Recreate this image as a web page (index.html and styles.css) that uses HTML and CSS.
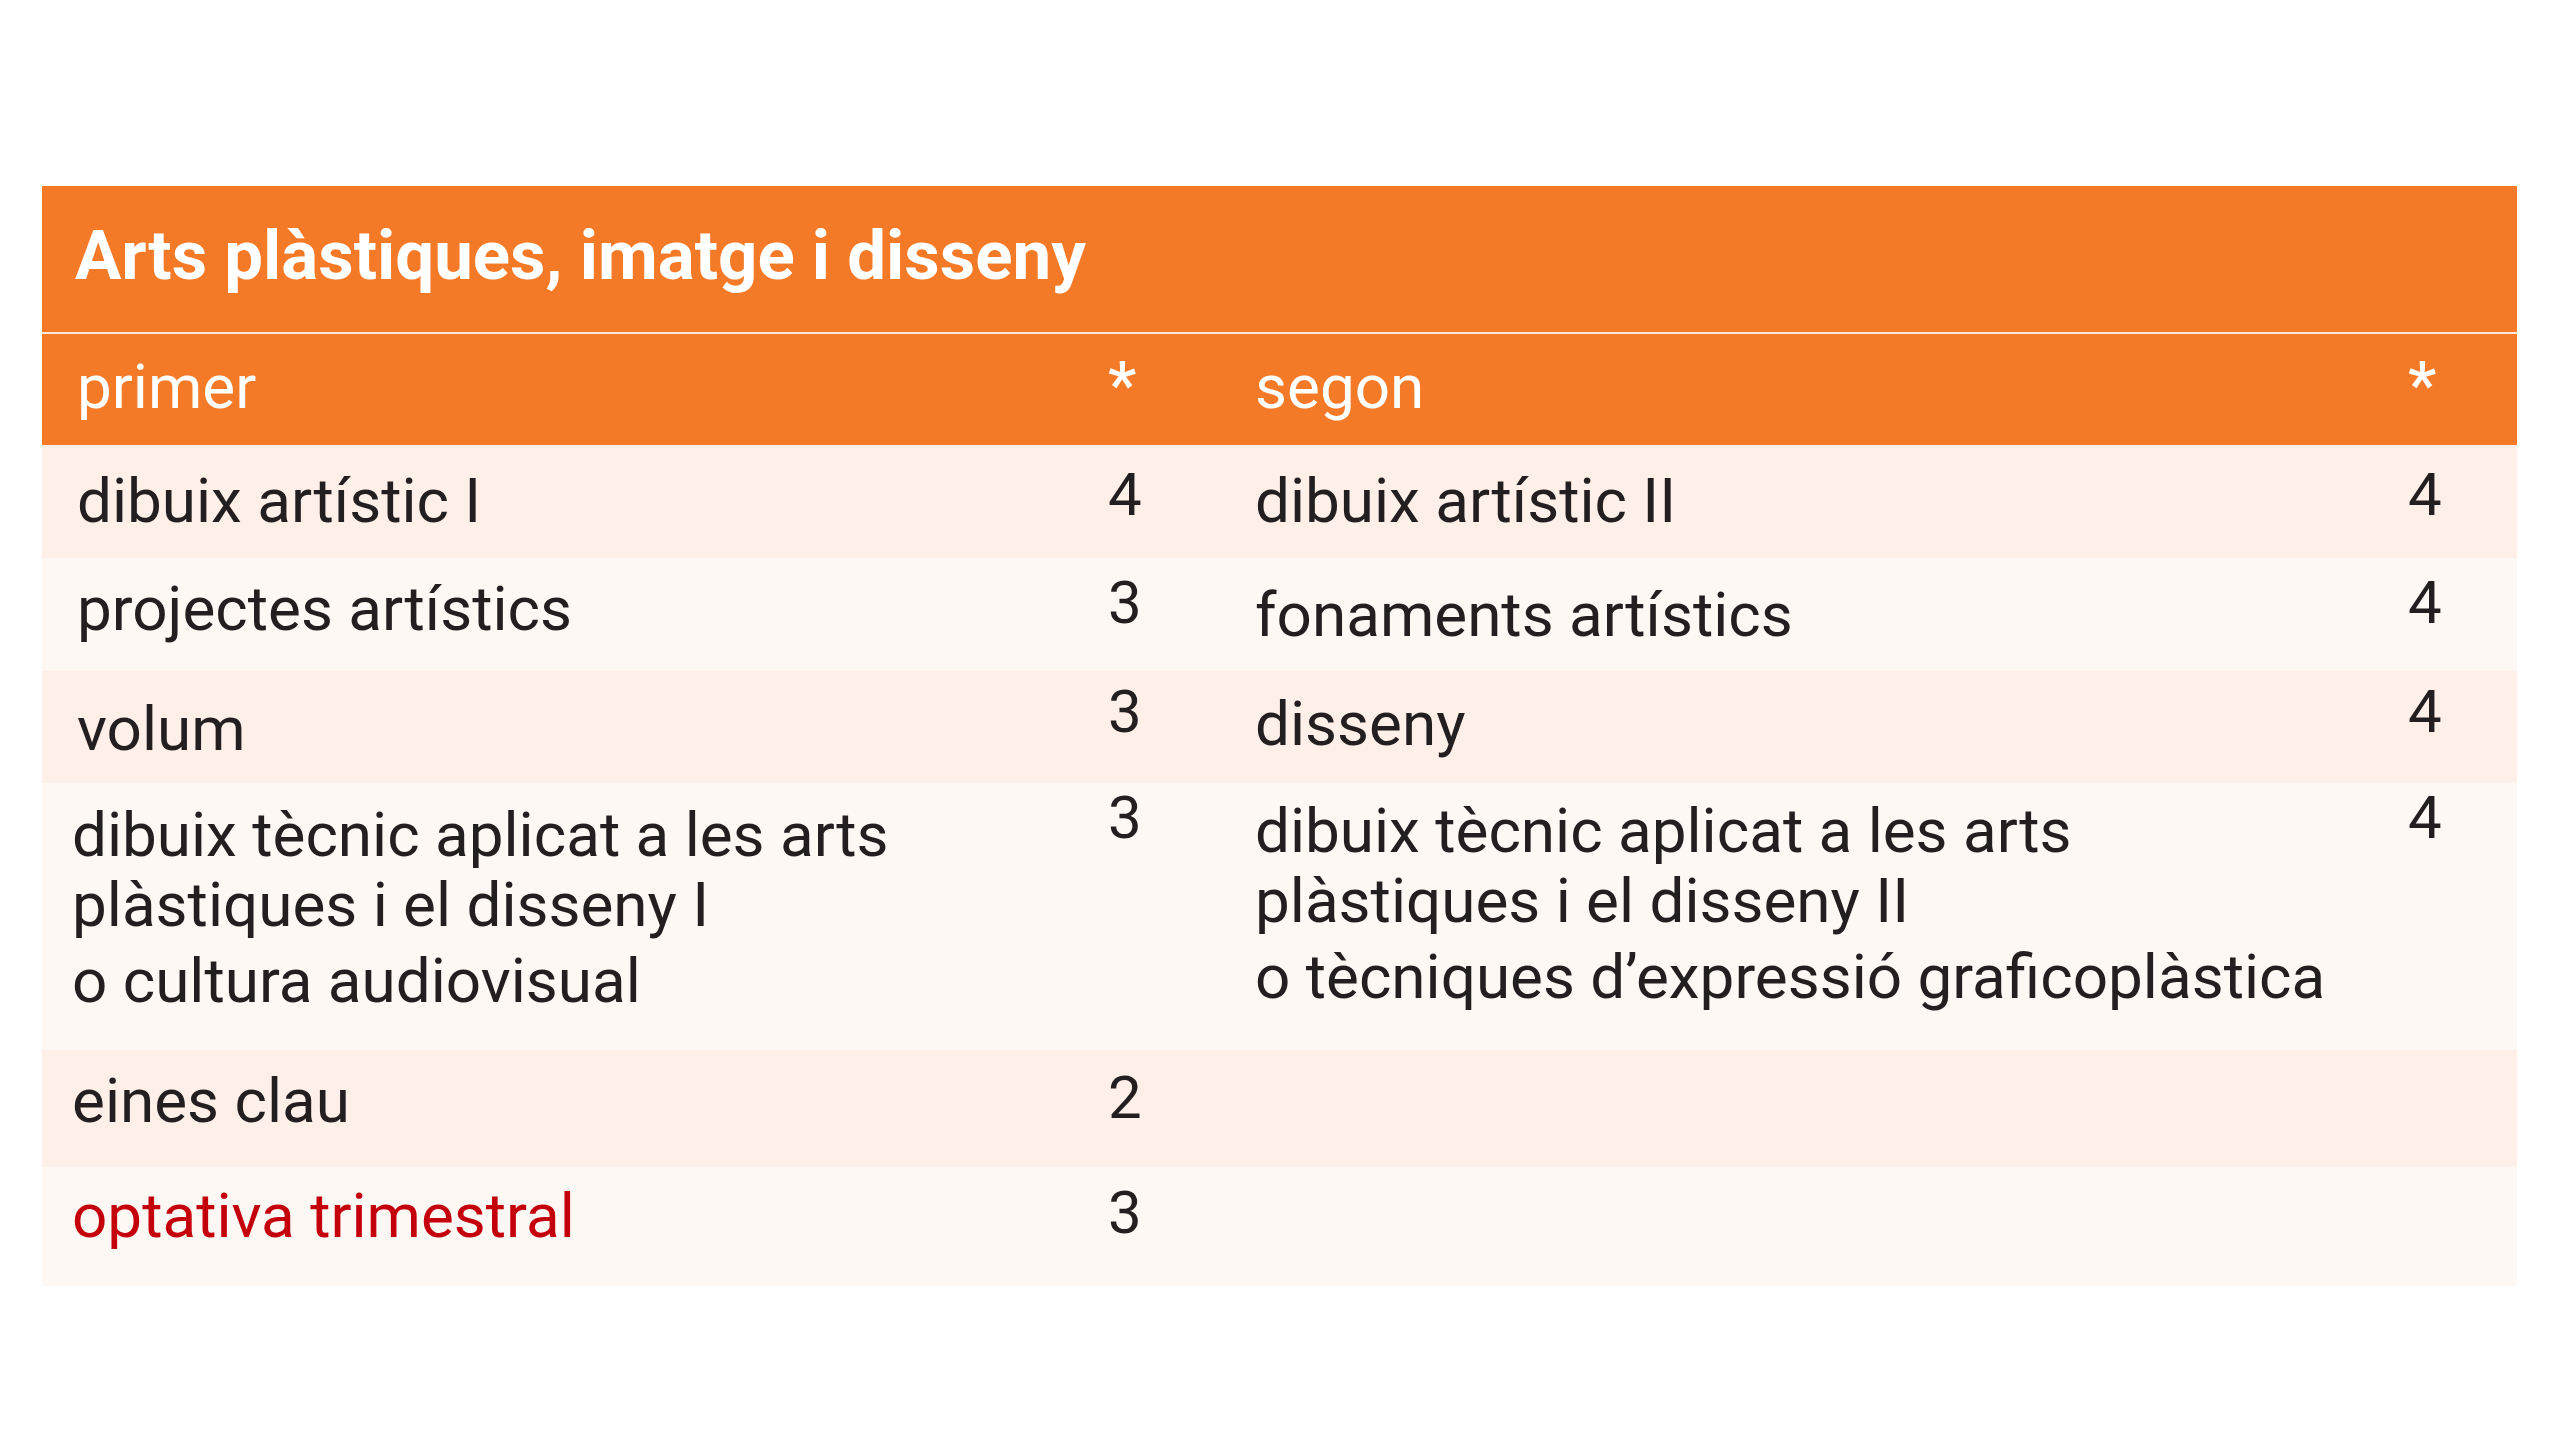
FILE: index.html
```html
<!DOCTYPE html>
<html lang="ca">
<head>
<meta charset="utf-8">
<title>Arts plàstiques, imatge i disseny</title>
<link rel="stylesheet" href="styles.css">
</head>
<body>
<section class="plan">
  <header class="plan-title">Arts plàstiques, imatge i disseny</header>
  <div class="row row-head">
    <div class="cell cell-text">primer</div>
    <div class="cell cell-star">*</div>
    <div class="cell cell-text">segon</div>
    <div class="cell cell-star">*</div>
  </div>
  <div class="row row-a r1">
    <div class="cell cell-text">dibuix artístic I</div>
    <div class="cell cell-num">4</div>
    <div class="cell cell-text">dibuix artístic II</div>
    <div class="cell cell-num">4</div>
  </div>
  <div class="row row-b r2">
    <div class="cell cell-text">projectes artístics</div>
    <div class="cell cell-num">3</div>
    <div class="cell cell-text shift-down">fonaments artístics</div>
    <div class="cell cell-num">4</div>
  </div>
  <div class="row row-a r3">
    <div class="cell cell-text">volum</div>
    <div class="cell cell-num">3</div>
    <div class="cell cell-text shift-up">disseny</div>
    <div class="cell cell-num">4</div>
  </div>
  <div class="row row-b r4">
    <div class="cell cell-text cell-multi">
      <p class="line-group">dibuix tècnic aplicat a les arts<br>plàstiques i el disseny I</p>
      <p class="line-alt">o cultura audiovisual</p>
    </div>
    <div class="cell cell-num">3</div>
    <div class="cell cell-text cell-multi shift-up">
      <p class="line-group">dibuix tècnic aplicat a les arts<br>plàstiques i el disseny II</p>
      <p class="line-alt">o tècniques d’expressió graficoplàstica</p>
    </div>
    <div class="cell cell-num">4</div>
  </div>
  <div class="row row-a r5">
    <div class="cell cell-text">eines clau</div>
    <div class="cell cell-num">2</div>
    <div class="cell cell-text"></div>
    <div class="cell cell-num"></div>
  </div>
  <div class="row row-b r6">
    <div class="cell cell-text optional">optativa trimestral</div>
    <div class="cell cell-num">3</div>
    <div class="cell cell-text"></div>
    <div class="cell cell-num"></div>
  </div>
</section>
</body>
</html>
```
FILE: styles.css
```css
html, body {
  margin: 0;
  padding: 0;
  background: #ffffff;
}

body {
  font-family: Roboto, "Noto Sans", "Liberation Sans", sans-serif;
  color: #231f20;
}

.plan {
  width: 2475px;
  margin: 186px 0 0 42px;
}

.plan-title {
  background: #f57a27;
  color: #ffffff;
  font-weight: 700;
  font-size: 69px;
  line-height: 80px;
  height: 148px;
  box-sizing: border-box;
  padding: 30px 0 0 33px;
  border-bottom: 2px solid #fde8da;
}

.row {
  display: grid;
  grid-template-columns: 1066px 112px 1188px 109px;
  font-size: 62px;
  line-height: 70px;
}

.cell {
  box-sizing: border-box;
}

.cell-text {
  padding: 19px 0 0 35px;
}

.cell-num {
  font-size: 60px;
  padding-top: 9px;
}

.row-head {
  background: #f57a27;
  color: #ffffff;
  height: 111px;
}

.row-head .cell-text {
  padding-top: 18px;
}

.cell-star {
  font-size: 64px;
  padding-top: 17px;
  font-weight: 500;
}

.row-a { background: #fef0e8; }
.row-b { background: #fdf8f4; }

.r1 { height: 113px; }
.r1 .cell-num { padding-top: 15px; }
.r1 .cell-text { padding-top: 21px; }

.r2 { height: 113px; }
.r2 .cell-num { padding-top: 10px; }
.r2 .cell-text { padding-top: 16px; }

.r3 { height: 112px; }
.r3 .cell-num { padding-top: 6px; }
.r3 .cell-text { padding-top: 23px; }

.r4 { height: 267px; }
.r4 .cell-num { padding-top: 0; }
.r4 .cell-text { padding-top: 17px; padding-left: 30px; }

.r5 { height: 117px; }
.r5 .cell-num { padding-top: 13px; }
.r5 .cell-text { padding-top: 16px; padding-left: 30px; }

.r6 { height: 119px; }
.r6 .cell-num { padding-top: 11px; }
.r6 .cell-text { padding-top: 14px; padding-left: 30px; }

.row .shift-down { padding-top: 22px; }
.r3 .shift-up { padding-top: 18px; }
.r4 .shift-up { padding-top: 13px; padding-left: 35px; }

.line-group,
.line-alt {
  margin: 0;
}

.line-alt {
  margin-top: 6px;
}

.optional {
  color: #c4000c;
}
```
